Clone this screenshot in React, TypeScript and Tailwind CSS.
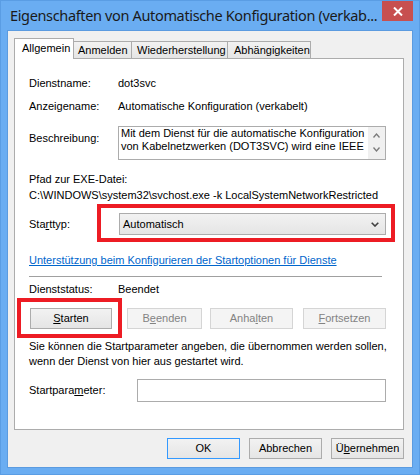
import React from "react";

const U = ({ c }: { c: string }) => <span className="underline underline-offset-[1px]">{c}</span>;

function Btn({
  children,
  w,
  disabled,
  primary,
}: {
  children: React.ReactNode;
  w: string;
  disabled?: boolean;
  primary?: boolean;
}) {
  const base = "h-[21px] flex items-center justify-center leading-[13px] shrink-0 " + w + " ";
  if (disabled) {
    return <div className={base + "border border-[#d5d5d5] bg-[#f4f4f4] text-[#838383]"}>{children}</div>;
  }
  return (
    <div
      className={
        base +
        (primary ? "border border-[#3399ff] " : "border border-[#acacac] ") +
        "bg-linear-to-b from-[#f2f2f2] to-[#e5e5e5]"
      }
    >
      {children}
    </div>
  );
}

export default function App() {
  return (
    <div className="w-[420px] h-[475px] bg-[#6aadf2] border border-[#5a9de4] flex flex-col pb-[6px] font-['Liberation_Sans',Arial,sans-serif] text-[11px] text-black select-none">
      {/* title bar */}
      <div className="h-[29px] flex items-start justify-between shrink-0">
        <div className="flex-1 min-w-0 overflow-hidden pl-[9px] pt-[4px] font-['Noto_Sans',sans-serif] text-[14.5px] leading-[20px] text-[#1a1a1a] whitespace-nowrap tracking-[-0.35px]">
          Eigenschaften von Automatische Konfiguration (verkab...
        </div>
        <div className="w-[31px] h-[20px] mr-[6px] bg-[#c75050] flex items-center justify-center shrink-0">
          <svg width="10" height="9" viewBox="0 0 10 9">
            <path d="M1 0.5 L9 8.5 M9 0.5 L1 8.5" stroke="#ffffff" strokeWidth="2" />
          </svg>
        </div>
      </div>

      {/* client */}
      <div className="mx-[6px] flex-1 border border-[#5b9be0] bg-[#f0f0f0] flex flex-col pt-[7px] pl-[6px]">
        {/* tabs */}
        <div className="flex items-end h-[20px] relative z-10">
          <div className="w-[60px] h-[21px] -mb-px bg-white border border-b-0 border-[#acacac] pl-[7px] pt-[3px] leading-[13px]">
            Allgemein
          </div>
          <div className="w-[58px] h-[17px] border-t border-r border-[#acacac] bg-linear-to-b from-[#f2f2f2] to-[#e5e5e5] pl-[4px] pt-[2px] leading-[13px]">
            Anmelden
          </div>
          <div className="w-[96px] h-[17px] border-t border-r border-[#acacac] bg-linear-to-b from-[#f2f2f2] to-[#e5e5e5] pl-[5px] pt-[2px] leading-[13px]">
            Wiederherstellung
          </div>
          <div className="w-[83px] h-[17px] border-t border-r border-[#acacac] bg-linear-to-b from-[#f2f2f2] to-[#e5e5e5] pl-[6px] pt-[2px] leading-[13px]">
            Abhängigkeiten
          </div>
        </div>

        {/* panel */}
        <div className="w-[390px] h-[372px] bg-white border border-[#acacac] flex flex-col pl-[14px] shrink-0">
          <div className="mt-[14px] h-[20px] flex items-center">
            <div className="w-[89px]">Dienstname:</div>
            <div>dot3svc</div>
          </div>
          <div className="mt-[3px] h-[20px] flex items-center">
            <div className="w-[89px]">Anzeigename:</div>
            <div>Automatische Konfiguration (verkabelt)</div>
          </div>
          <div className="mt-[10px] flex items-start">
            <div className="w-[89px] pt-[6px] leading-[13px]">Beschreibung:</div>
            <div className="w-[268px] h-[34px] border border-[#acacac] flex">
              <div className="flex-1 pl-[2px] leading-[13px] whitespace-nowrap overflow-hidden">
                <div>Mit dem Dienst für die automatische Konfiguration</div>
                <div>von Kabelnetzwerken (DOT3SVC) wird eine IEEE</div>
              </div>
              <div className="w-[17px] bg-[#f0f0f0] flex flex-col items-center pt-[6px] gap-[9px]">
                <svg width="7" height="5" viewBox="0 0 7 5">
                  <path d="M0.5 4.5 L3.5 1 L6.5 4.5" stroke="#7a7a7a" strokeWidth="1.3" fill="none" />
                </svg>
                <svg width="7" height="5" viewBox="0 0 7 5">
                  <path d="M0.5 0.5 L3.5 4 L6.5 0.5" stroke="#7a7a7a" strokeWidth="1.3" fill="none" />
                </svg>
              </div>
            </div>
          </div>
          <div className="mt-[12px] leading-[14px] h-[14px]">Pfad zur EXE-Datei:</div>
          <div className="mt-[2px] leading-[14px] h-[14px] whitespace-nowrap">
            C:\WINDOWS\system32\svchost.exe -k LocalSystemNetworkRestricted
          </div>
          <div className="mt-[11px] h-[22px] flex items-center">
            <div className="w-[90px]">
              Sta<U c="r" />ttyp:
            </div>
            <div className="relative w-[267px] h-[22px] border border-[#acacac] bg-linear-to-b from-[#f2f2f2] to-[#e5e5e5] flex items-center justify-between pl-[3px] pr-[6px]">
              <span>Automatisch</span>
              <svg width="8" height="5" viewBox="0 0 8 5">
                <path d="M0.7 0.7 L4 4 L7.3 0.7" stroke="#404040" strokeWidth="1.6" fill="none" />
              </svg>
              <div className="absolute left-[-23px] right-[-10px] top-[-10px] bottom-[-8px] border-4 border-[#ed1c24] pointer-events-none" />
            </div>
          </div>
          <div className="mt-[18px] leading-[14px] h-[14px] text-[#0066cc] underline underline-offset-[1px] whitespace-nowrap">
            Unterstützung beim Konfigurieren der Startoptionen für Dienste
          </div>
          <div className="mt-[9px] w-[353px] h-px bg-[#a0a0a0]" />
          <div className="mt-[5px] leading-[14px] h-[14px] flex">
            <div className="w-[89px]">Dienststatus:</div>
            <div>Beendet</div>
          </div>
          <div className="mt-[12px] flex items-center">
            <div className="ml-[1px] relative">
              <Btn w="w-[82px]">
                <span>
                  <U c="S" />tarten
                </span>
              </Btn>
              <div className="absolute left-[-13px] right-[-10px] top-[-10px] bottom-[-9px] border-4 border-[#ed1c24] pointer-events-none" />
            </div>
            <div className="ml-[15px]">
              <Btn w="w-[75px]" disabled>
                <span>
                  B<U c="e" />enden
                </span>
              </Btn>
            </div>
            <div className="ml-[8px]">
              <Btn w="w-[83px]" disabled>
                <span>
                  Anha<U c="l" />ten
                </span>
              </Btn>
            </div>
            <div className="ml-[10px]">
              <Btn w="w-[83px]" disabled>
                <span>
                  <U c="F" />ortsetzen
                </span>
              </Btn>
            </div>
          </div>
          <div className="mt-[10px] leading-[15px] whitespace-nowrap">
            <div>Sie können die Startparameter angeben, die übernommen werden sollen,</div>
            <div>wenn der Dienst von hier aus gestartet wird.</div>
          </div>
          <div className="mt-[10px] h-[23px] flex items-center">
            <div className="w-[108px]">
              Startpara<U c="m" />eter:
            </div>
            <div className="w-[249px] h-[23px] bg-white border border-[#acacac]" />
          </div>
        </div>

        {/* dialog buttons */}
        <div className="mt-[8px] flex justify-end gap-[9px] pr-[8px]">
          <Btn w="w-[73px]" primary>
            OK
          </Btn>
          <Btn w="w-[73px]">Abbrechen</Btn>
          <Btn w="w-[73px]">
            <span>
              Ü<U c="b" />ernehmen
            </span>
          </Btn>
        </div>
      </div>
    </div>
  );
}
